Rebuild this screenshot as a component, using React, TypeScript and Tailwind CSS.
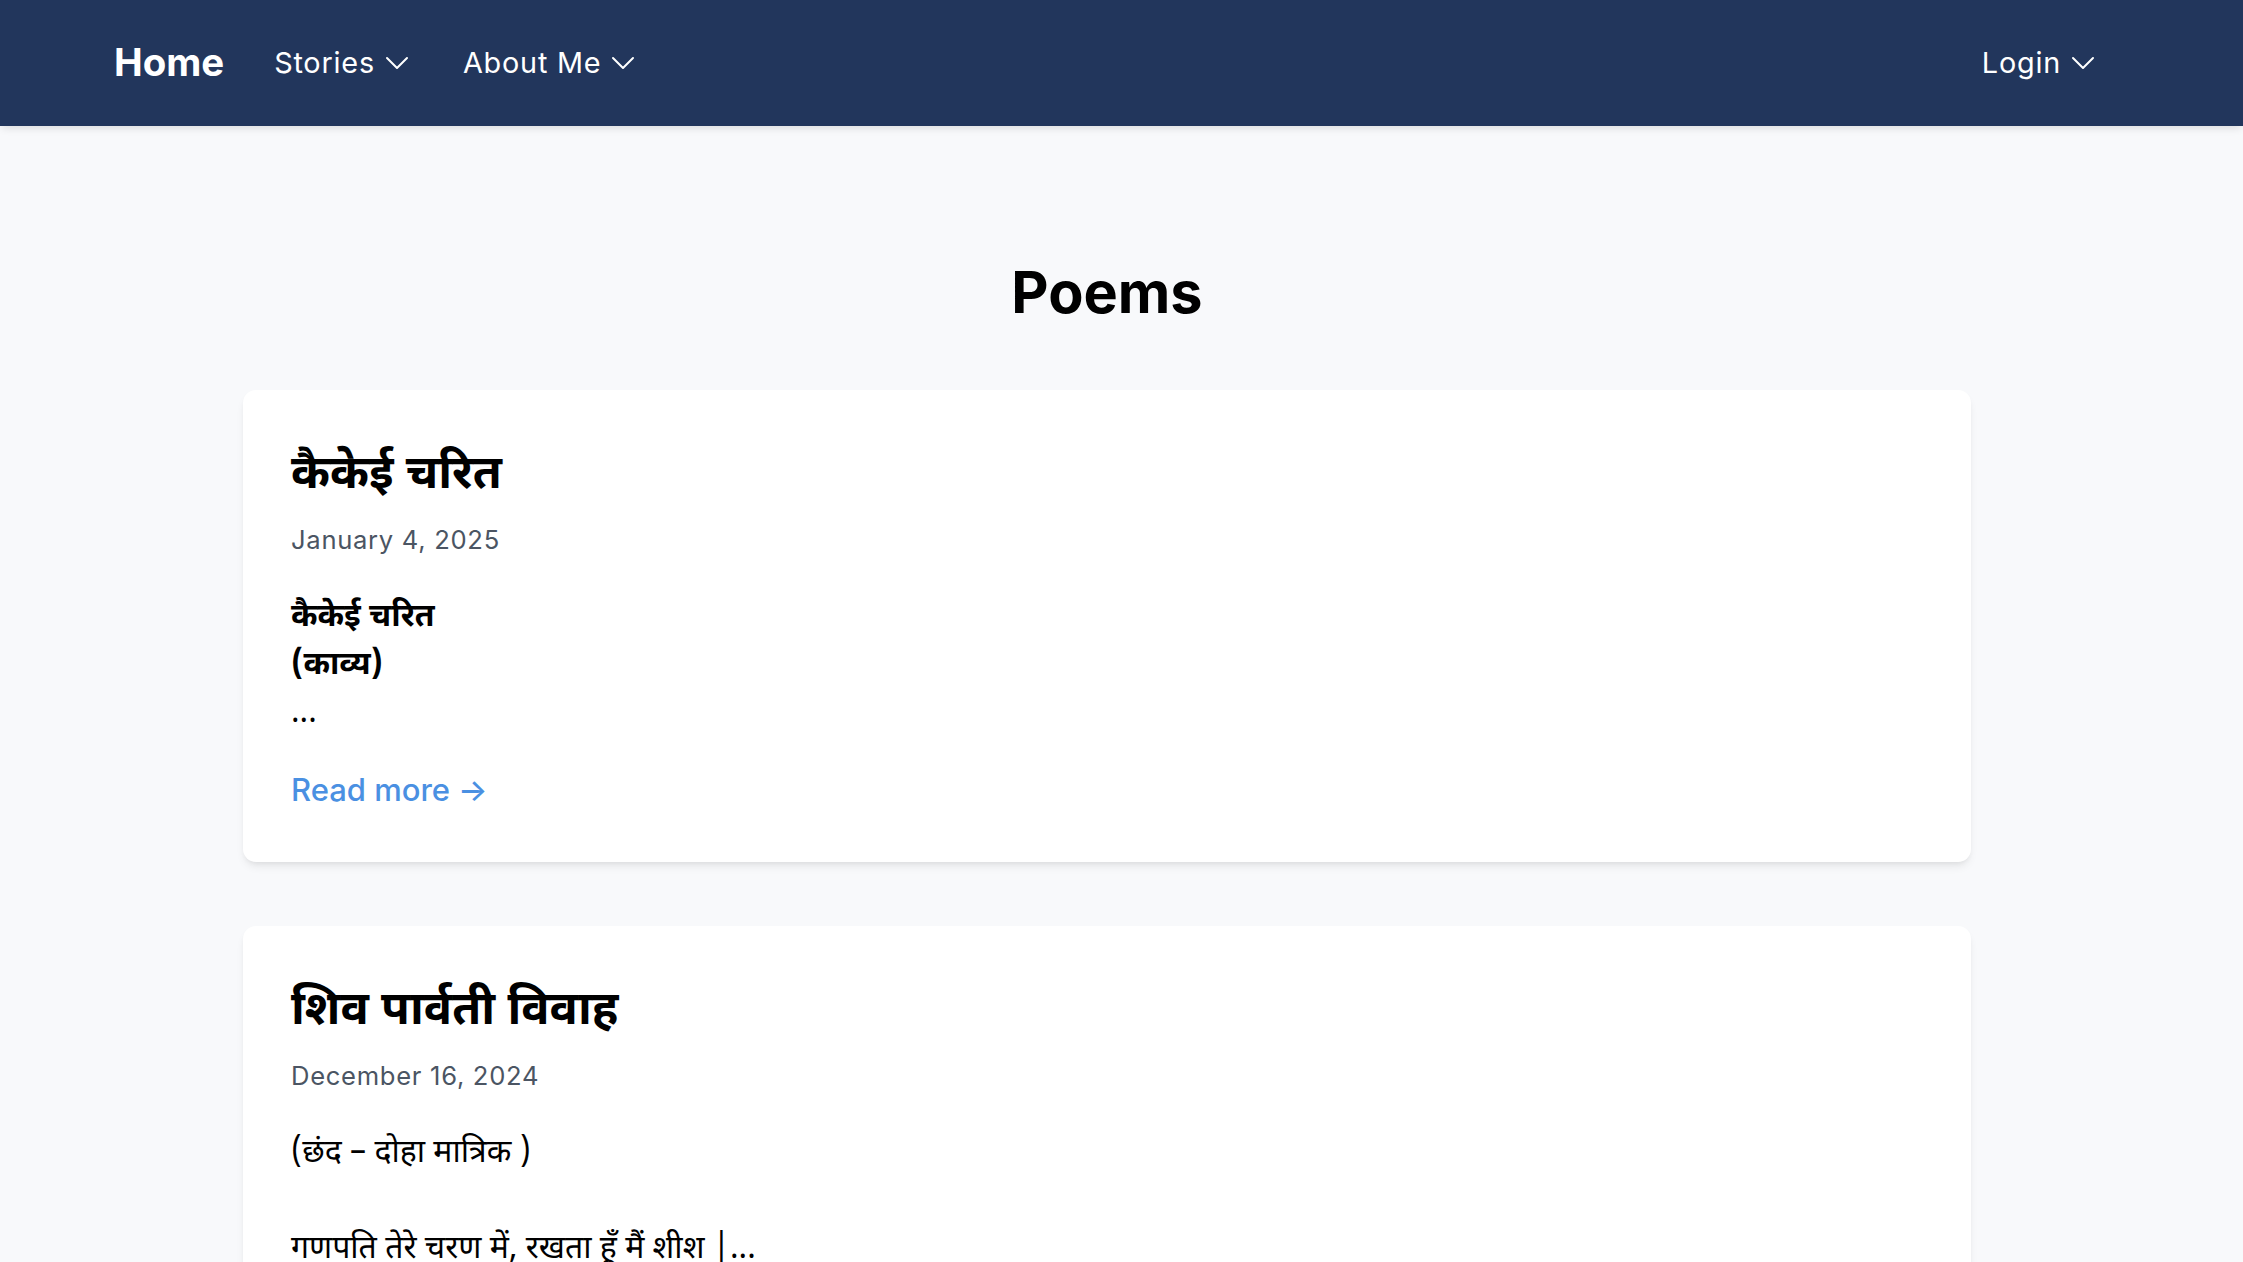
import React from "react"

const Chevron = () => (
    <svg viewBox="0 0 24 24" fill="none" stroke="currentColor" strokeWidth={1.5} className="w-[32px] h-[32px]">
        <path strokeLinecap="round" strokeLinejoin="round" d="m19.5 8.25-7.5 7.5-7.5-7.5" />
    </svg>
)

const NavItem = ({ label }: { label: string }) => (
    <button className="flex items-center gap-[6px] text-[28.8px] tracking-[0.8px] text-white">
        <span>{label}</span>
        <Chevron />
    </button>
)

const hindi = "font-['Noto_Sans_Devanagari','Noto_Sans',sans-serif]"

const PoemCard = (props: any) => {
    const { title, date, children, more } = props

    return (
        <article className="bg-white rounded-[13px] shadow-[0_6px_10px_-2px_rgba(0,0,0,0.08),0_3px_6px_-3px_rgba(0,0,0,0.08)] pl-[48px] pr-[48px] pt-[55px] pb-[48px]">
            <h2 className={`${hindi} text-[47px] font-bold leading-[64px] text-black`}>{title}</h2>
            <p className="mt-[12px] text-[25.6px] tracking-[0.7px] leading-[38px] text-[#4b5563]">{date}</p>
            <div className={`${hindi} mt-[35px] text-[32px] leading-[48px] text-black`}>{children}</div>
            {more && (
                <a className="mt-[29px] inline-flex items-center gap-[8px] text-[31px] font-medium text-[#4a90e2]">
                    Read more <span>→</span>
                </a>
            )}
        </article>
    )
}

const App = () => {
    return (
        <div className="min-h-[1262px] bg-[#f8f9fb] font-['Inter','Liberation_Sans',sans-serif]">
            <nav className="relative z-10 h-[126px] bg-[#22365c] shadow-[0_4px_8px_-2px_rgba(0,0,0,0.12)] flex items-center justify-between pl-[114px] pr-[144px]">
                <div className="flex items-center gap-[50px]">
                    <a className="text-[38.4px] font-bold text-white">Home</a>
                    <NavItem label="Stories" />
                    <NavItem label="About Me" />
                </div>
                <NavItem label="Login" />
            </nav>

            <main className="pl-[243px] w-[1971px]">
                <h1 className="mt-[134px] text-center text-[57.6px] font-bold leading-[64px] text-black">Poems</h1>

                <div className="mt-[66px] flex flex-col gap-[64px]">
                    <PoemCard title="कैकेई चरित" date="January 4, 2025" more>
                        <p className="font-bold">कैकेई चरित</p>
                        <p className="font-bold">(काव्य)</p>
                        <p>...</p>
                    </PoemCard>

                    <PoemCard title="शिव पार्वती विवाह" date="December 16, 2024" more>
                        <p>(छंद – दोहा मात्रिक )</p>
                        <p>&nbsp;</p>
                        <p>गणपति तेरे चरण में, रखता हूँ मैं शीश |...</p>
                    </PoemCard>
                </div>
            </main>
        </div>
    )
}

export default App
